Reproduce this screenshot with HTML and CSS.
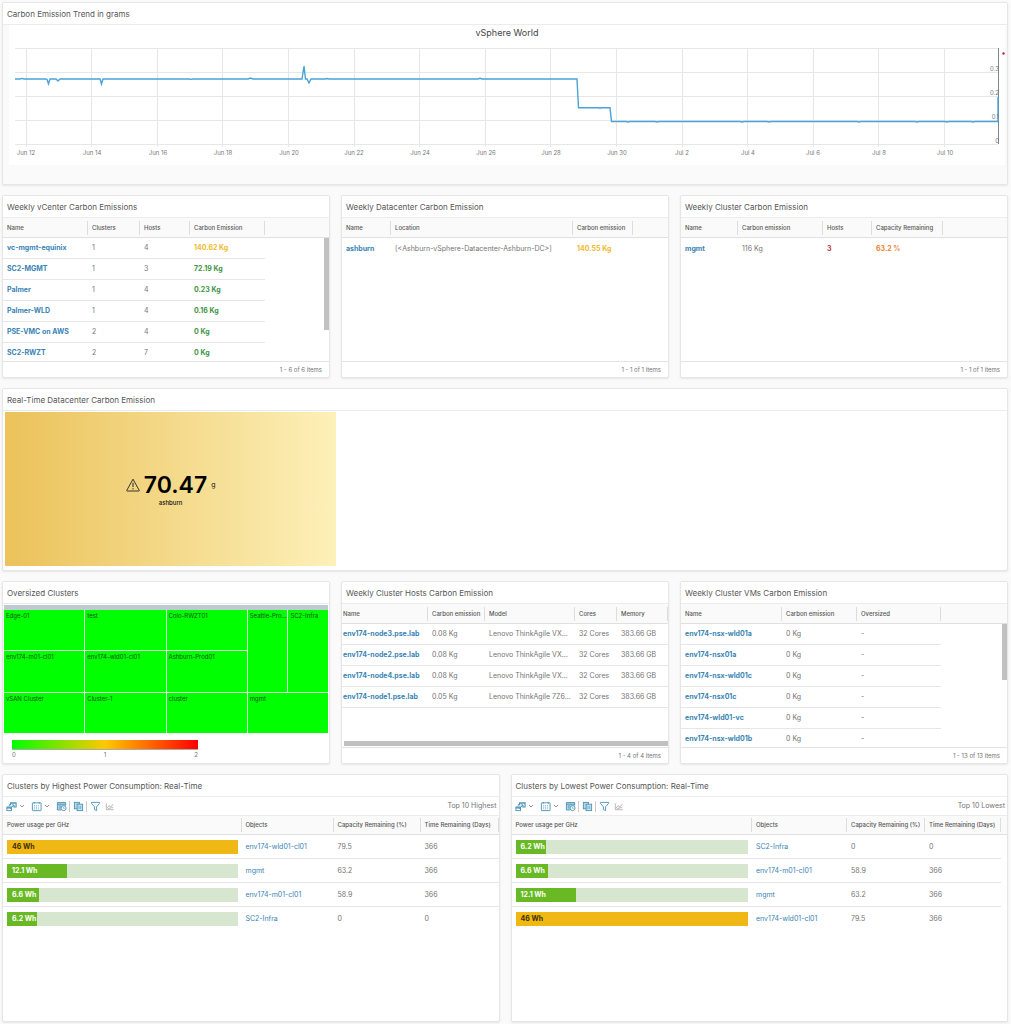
FILE: index.html
```html
<!DOCTYPE html>
<html lang="en">
<head>
    <meta charset="utf-8">
    <title>Carbon Emission Dashboard</title>
    <link rel="stylesheet" href="styles.css">
</head>
<body>
    <svg class="sprite" aria-hidden="true">
        <symbol id="i-actions" viewBox="0 0 12 12">
            <rect x="1" y="6.500" width="5" height="4" fill="none" stroke="currentColor"/>
            <path d="M1 7.500h5" stroke="currentColor" stroke-width="1.500"/>
            <path d="M5 4.500V2h6v4.500H8M5.500 2.500h5" fill="none" stroke="currentColor" stroke-width="1.200"/>
            <path d="M3.500 5.500V4H5M4.500 8.500L8.500 4.500M6.300 4.300h2.500v2.400" fill="none" stroke="currentColor"/>
        </symbol>
        <symbol id="i-chevron" viewBox="0 0 6 6">
            <path d="M1 2l2 2 2-2" fill="none" stroke="currentColor" stroke-width="0.800"/>
        </symbol>
        <symbol id="i-calendar" viewBox="0 0 12 12">
            <rect x="1.500" y="2" width="9.500" height="8.500" rx="0.500" fill="none" stroke="currentColor"/>
            <path d="M3.500 1v2M9 1v2" stroke="currentColor"/>
            <path d="M3.500 5h5.500M3.500 6.800h5.500M3.500 8.600h5.500" stroke="currentColor" stroke-width="0.800" stroke-dasharray="1 1"/>
        </symbol>
        <symbol id="i-reset" viewBox="0 0 12 12">
            <path d="M10.500 5V1.700h-9V9.800h4" fill="#bcd8e4" stroke="currentColor"/>
            <path d="M1.500 3.500h9M3 5.500h3M3 7.500h2" stroke="currentColor"/>
            <circle cx="8.300" cy="7.800" r="2.700" fill="#fff" stroke="currentColor"/>
            <path d="M8.300 6.300v1.700h1.300" fill="none" stroke="currentColor" stroke-width="0.700"/>
        </symbol>
        <symbol id="i-copy" viewBox="0 0 12 12">
            <rect x="1.500" y="1.500" width="5.500" height="7" fill="#bcd8e4" stroke="currentColor"/>
            <rect x="4.500" y="3.500" width="6" height="7" fill="#d6e8ef" stroke="currentColor"/>
            <path d="M6.500 5v4M8.500 5v4" stroke="currentColor" stroke-width="0.800"/>
        </symbol>
        <symbol id="i-filter" viewBox="0 0 12 12">
            <path d="M1.500 1.500h9v1L7.200 6.300v4.200L4.800 9.300v-3L1.500 2.500z" fill="none" stroke="currentColor" stroke-linejoin="round"/>
        </symbol>
        <symbol id="i-chart" viewBox="0 0 12 12">
            <path d="M2.500 2.500v7h8M3.500 7.500l2-2.500 2 1.500L10 3.500M4 8.700l2.500-1 3.500-.5" fill="none" stroke="currentColor" stroke-width="0.900"/>
        </symbol>
    </svg>

    <main class="dashboard">
        <section class="widget wide">
            <h2>Carbon Emission Trend in grams</h2>
            <div class="trend">
                <h3>vSphere World</h3>
                <svg viewBox="0 0 996 124" role="img" aria-label="Carbon emission trend">
                    <g class="grid-lines">
                        <path d="M6 7.500h983M6 31.500h983M6 55.500h983M6 79.500h983M6 103.500h983"/>
                        <path d="M17.500 7v99M82.500 7v99M148.500 7v99M213.500 7v99M279.500 7v99M345.500 7v99M410.500 7v99M476.500 7v99M541.500 7v99M607.500 7v99M673.500 7v99M738.500 7v99M804.500 7v99M869.500 7v99M935.500 7v99"/>
                    </g>
                    <path class="axis" d="M989.500 7v96"/>
                    <path class="series" stroke-width="1.400" d="M6 38H11L13 37.400L15 38H37L38 38.300L39.500 43L41 38H47L49 40L51 38H91L92.500 43L94 38H180L182 38.400L184 38H239L241.500 37L244 38H293L295 25L296.500 38H298L300 42L302 38H316L318 37.500L320 38H469L471 37.300L473 38H568L569.500 66.800H590L591 67.300L592 66.800H601L602.500 80.500H617L619 81L621 80.500H646L648 81L650 80.500H731L733 81L735 80.500H758L760 81L762 80.500H848L850 81L852 80.500H906L908 81L910 80.500H936L938 81L940 80.500H962L964 81L966 80.500H989V56"/>
                    <circle cx="994.500" cy="12.500" r="1.200" fill="#c8202c"/>
                    <g class="y-labels">
                        <text x="990" y="30">0.3</text>
                        <text x="990" y="54">0.2</text>
                        <text x="990" y="78">0.1</text>
                        <text x="990" y="102">0</text>
                    </g>
                    <g class="x-labels">
                        <text x="17" y="114">Jun 12</text>
                        <text x="83" y="114">Jun 14</text>
                        <text x="149" y="114">Jun 16</text>
                        <text x="214" y="114">Jun 18</text>
                        <text x="280" y="114">Jun 20</text>
                        <text x="345" y="114">Jun 22</text>
                        <text x="411" y="114">Jun 24</text>
                        <text x="477" y="114">Jun 26</text>
                        <text x="542" y="114">Jun 28</text>
                        <text x="608" y="114">Jun 30</text>
                        <text x="673" y="114">Jul 2</text>
                        <text x="739" y="114">Jul 4</text>
                        <text x="804" y="114">Jul 6</text>
                        <text x="870" y="114">Jul 8</text>
                        <text x="936" y="114">Jul 10</text>
                    </g>
                </svg>
            </div>
        </section>

        <section class="widget third">
            <h2>Weekly vCenter Carbon Emissions</h2>
            <div class="grid-body">
                <table class="vcenters">
                    <colgroup><col><col><col><col><col></colgroup>
                    <thead>
                        <tr><th>Name</th><th>Clusters</th><th>Hosts</th><th>Carbon Emission</th><td></td></tr>
                    </thead>
                    <tbody>
                        <tr><td><a href="#">vc-mgmt-equinix</a></td><td>1</td><td>4</td><td class="warn">140.62 Kg</td></tr>
                        <tr><td><a href="#">SC2-MGMT</a></td><td>1</td><td>3</td><td class="good">72.19 Kg</td></tr>
                        <tr><td><a href="#">Palmer</a></td><td>1</td><td>4</td><td class="good">0.23 Kg</td></tr>
                        <tr><td><a href="#">Palmer-WLD</a></td><td>1</td><td>4</td><td class="good">0.16 Kg</td></tr>
                        <tr><td><a href="#">PSE-VMC on AWS</a></td><td>2</td><td>4</td><td class="good">0 Kg</td></tr>
                        <tr><td><a href="#">SC2-RWZT</a></td><td>2</td><td>7</td><td class="good">0 Kg</td></tr>
                    </tbody>
                </table>
                <div class="thumb-y tall"></div>
            </div>
            <footer>1 - 6 of 6 items</footer>
        </section>

        <section class="widget third">
            <h2>Weekly Datacenter Carbon Emission</h2>
            <div class="grid-body">
                <table class="datacenters">
                    <colgroup><col><col><col><col></colgroup>
                    <thead>
                        <tr><th>Name</th><th>Location</th><th>Carbon emission</th><td></td></tr>
                    </thead>
                    <tbody class="single">
                        <tr><td><a href="#">ashburn</a></td><td>[&lt;Ashburn-vSphere-Datacenter-Ashburn-DC&gt;]</td><td class="warn">140.55 Kg</td></tr>
                    </tbody>
                </table>
            </div>
            <footer>1 - 1 of 1 items</footer>
        </section>

        <section class="widget third">
            <h2>Weekly Cluster Carbon Emission</h2>
            <div class="grid-body">
                <table class="clusters">
                    <colgroup><col><col><col><col><col></colgroup>
                    <thead>
                        <tr><th>Name</th><th>Carbon emission</th><th>Hosts</th><th>Capacity Remaining</th><td></td></tr>
                    </thead>
                    <tbody class="single">
                        <tr><td><a href="#">mgmt</a></td><td>116 Kg</td><td class="critical">3</td><td class="high">63.2 %</td></tr>
                    </tbody>
                </table>
            </div>
            <footer>1 - 1 of 1 items</footer>
        </section>

        <section class="widget wide">
            <h2>Real-Time Datacenter Carbon Emission</h2>
            <div class="scoreboard">
                <div class="score">
                    <svg viewBox="0 0 14 14" aria-hidden="true">
                        <path d="M7 1.200L13.200 12.300a.5.5 0 0 1-.4.700H1.200a.5.5 0 0 1-.4-.7z" fill="none" stroke="#222" stroke-width="0.900" stroke-linejoin="round"/>
                        <path d="M7 4.800v4.200M7 10.200v1.200" stroke="#222"/>
                    </svg>
                    <strong>70.47</strong>
                    <span>g</span>
                </div>
                <div class="score-name">ashburn</div>
            </div>
        </section>

        <section class="widget third">
            <h2>Oversized Clusters</h2>
            <div class="heatmap">
                <div class="cell">Edge-01</div>
                <div class="cell">test</div>
                <div class="cell">Colo-RWZT01</div>
                <div class="cell tall">Seattle-Prod01</div>
                <div class="cell tall">SC2-Infra</div>
                <div class="cell">env174-m01-cl01</div>
                <div class="cell">env174-wld01-cl01</div>
                <div class="cell">Ashburn-Prod01</div>
                <div class="cell">vSAN Cluster</div>
                <div class="cell">Cluster-1</div>
                <div class="cell">cluster</div>
                <div class="cell">mgmt</div>
            </div>
            <div class="legend">
                <div class="scale"></div>
                <div class="ticks"><span>0</span><span>1</span><span>2</span></div>
            </div>
        </section>

        <section class="widget third">
            <h2>Weekly Cluster Hosts Carbon Emission</h2>
            <div class="grid-body">
                <table class="hosts">
                    <colgroup><col><col><col><col><col></colgroup>
                    <thead>
                        <tr><th>Name</th><th>Carbon emission</th><th>Model</th><th>Cores</th><th>Memory</th></tr>
                    </thead>
                    <tbody>
                        <tr><td><a href="#">env174-node3.pse.lab</a></td><td>0.08 Kg</td><td>Lenovo ThinkAgile VX7520</td><td>32 Cores</td><td>383.66 GB</td></tr>
                        <tr><td><a href="#">env174-node2.pse.lab</a></td><td>0.08 Kg</td><td>Lenovo ThinkAgile VX7520</td><td>32 Cores</td><td>383.66 GB</td></tr>
                        <tr><td><a href="#">env174-node4.pse.lab</a></td><td>0.08 Kg</td><td>Lenovo ThinkAgile VX7520</td><td>32 Cores</td><td>383.66 GB</td></tr>
                        <tr><td><a href="#">env174-node1.pse.lab</a></td><td>0.05 Kg</td><td>Lenovo ThinkAgile 7Z63CTO</td><td>32 Cores</td><td>383.66 GB</td></tr>
                    </tbody>
                </table>
            </div>
            <div class="thumb-x"></div>
            <footer>1 - 4 of 4 items</footer>
        </section>

        <section class="widget third">
            <h2>Weekly Cluster VMs Carbon Emission</h2>
            <div class="grid-body">
                <table class="vms">
                    <colgroup><col><col><col><col></colgroup>
                    <thead>
                        <tr><th>Name</th><th>Carbon emission</th><th>Oversized</th><td></td></tr>
                    </thead>
                    <tbody>
                        <tr><td><a href="#">env174-nsx-wld01a</a></td><td>0 Kg</td><td>-</td></tr>
                        <tr><td><a href="#">env174-nsx01a</a></td><td>0 Kg</td><td>-</td></tr>
                        <tr><td><a href="#">env174-nsx-wld01c</a></td><td>0 Kg</td><td>-</td></tr>
                        <tr><td><a href="#">env174-nsx01c</a></td><td>0 Kg</td><td>-</td></tr>
                        <tr><td><a href="#">env174-wld01-vc</a></td><td>0 Kg</td><td>-</td></tr>
                        <tr><td><a href="#">env174-nsx-wld01b</a></td><td>0 Kg</td><td>-</td></tr>
                    </tbody>
                </table>
                <div class="thumb-y"></div>
            </div>
            <footer>1 - 13 of 13 items</footer>
        </section>

        <section class="widget half">
            <h2>Clusters by Highest Power Consumption: Real-Time</h2>
            <div class="toolbar">
                <button type="button" aria-label="Actions"><svg><use href="#i-actions"/></svg><svg class="chevron"><use href="#i-chevron"/></svg></button>
                <button type="button" aria-label="Date controls"><svg><use href="#i-calendar"/></svg><svg class="chevron"><use href="#i-chevron"/></svg></button>
                <button type="button" class="divided" aria-label="Reset time"><svg><use href="#i-reset"/></svg></button>
                <button type="button" class="divided" aria-label="Copy"><svg><use href="#i-copy"/></svg></button>
                <button type="button" aria-label="Filter"><svg><use href="#i-filter"/></svg></button>
                <button type="button" class="off" aria-label="Show chart" disabled><svg><use href="#i-chart"/></svg></button>
                <span>Top 10 Highest</span>
            </div>
            <table class="top-n highest">
                <colgroup><col><col><col><col></colgroup>
                <thead>
                    <tr><th>Power usage per GHz</th><th>Objects</th><th>Capacity Remaining (%)</th><th>Time Remaining (Days)</th></tr>
                </thead>
                <tbody>
                    <tr><td><div class="bar"><div class="fill amber" style="width: 100%">46 Wh</div></div></td><td><a href="#">env174-wld01-cl01</a></td><td>79.5</td><td>366</td></tr>
                    <tr><td><div class="bar"><div class="fill" style="width: 26%">12.1 Wh</div></div></td><td><a href="#">mgmt</a></td><td>63.2</td><td>366</td></tr>
                    <tr><td><div class="bar"><div class="fill" style="width: 14%">6.6 Wh</div></div></td><td><a href="#">env174-m01-cl01</a></td><td>58.9</td><td>366</td></tr>
                    <tr><td><div class="bar"><div class="fill" style="width: 13%">6.2 Wh</div></div></td><td><a href="#">SC2-Infra</a></td><td>0</td><td>0</td></tr>
                </tbody>
            </table>
        </section>

        <section class="widget half">
            <h2>Clusters by Lowest Power Consumption: Real-Time</h2>
            <div class="toolbar">
                <button type="button" aria-label="Actions"><svg><use href="#i-actions"/></svg><svg class="chevron"><use href="#i-chevron"/></svg></button>
                <button type="button" aria-label="Date controls"><svg><use href="#i-calendar"/></svg><svg class="chevron"><use href="#i-chevron"/></svg></button>
                <button type="button" class="divided" aria-label="Reset time"><svg><use href="#i-reset"/></svg></button>
                <button type="button" class="divided" aria-label="Copy"><svg><use href="#i-copy"/></svg></button>
                <button type="button" aria-label="Filter"><svg><use href="#i-filter"/></svg></button>
                <button type="button" class="off" aria-label="Show chart" disabled><svg><use href="#i-chart"/></svg></button>
                <span>Top 10 Lowest</span>
            </div>
            <table class="top-n lowest">
                <colgroup><col><col><col><col><col></colgroup>
                <thead>
                    <tr><th>Power usage per GHz</th><th>Objects</th><th>Capacity Remaining (%)</th><th>Time Remaining (Days)</th><td></td></tr>
                </thead>
                <tbody>
                    <tr><td><div class="bar"><div class="fill" style="width: 13%">6.2 Wh</div></div></td><td><a href="#">SC2-Infra</a></td><td>0</td><td>0</td></tr>
                    <tr><td><div class="bar"><div class="fill" style="width: 14%">6.6 Wh</div></div></td><td><a href="#">env174-m01-cl01</a></td><td>58.9</td><td>366</td></tr>
                    <tr><td><div class="bar"><div class="fill" style="width: 26%">12.1 Wh</div></div></td><td><a href="#">mgmt</a></td><td>63.2</td><td>366</td></tr>
                    <tr><td><div class="bar"><div class="fill amber" style="width: 100%">46 Wh</div></div></td><td><a href="#">env174-wld01-cl01</a></td><td>79.5</td><td>366</td></tr>
                </tbody>
            </table>
        </section>
    </main>
</body>
</html>
```
FILE: styles.css
```css
* {
    box-sizing: border-box;
}
body {
    margin: 0;
    background: #fafafa;
    color: #747474;
    font-family: Inter, "Liberation Sans", sans-serif;
    font-size: 7px;
    line-height: 10px;
}
.sprite {
    display: none;
}
.dashboard {
    display: grid;
    grid-template-columns: repeat(6, 1fr);
    grid-template-rows: repeat(4, minmax(183px, auto)) minmax(248px, auto);
    gap: 10px 11px;
    padding: 2px 3px 2px 2px;
}

/* widgets */
.widget {
    display: flex;
    flex-direction: column;
    min-width: 0;
    background: #fff;
    border: 1px solid #e6e6e6;
    border-radius: 2px;
    box-shadow: 0 1px 2px #e6e6e6;
}
.wide {
    grid-column: span 6;
    background: #fafafa;
}
.third {
    grid-column: span 2;
}
.half {
    grid-column: span 3;
}
h2 {
    margin: 0;
    padding: 0 4px;
    height: 22px;
    line-height: 22px;
    font-size: 8px;
    font-weight: 400;
    color: #565656;
    background: #fff;
    border-bottom: 1px solid #ececec;
    white-space: nowrap;
}
a {
    color: #3a84b4;
    text-decoration: none;
}
footer {
    height: 16px;
    padding: 0 7px;
    line-height: 15px;
    font-size: 6px;
    text-align: right;
    border-top: 1px solid #e4e4e4;
}

/* trend chart */
.trend {
    margin: 0 2px 0 6px;
    background: #fff;
}
.trend h3 {
    margin: 0;
    height: 16px;
    line-height: 16px;
    text-align: center;
    font-size: 9px;
    font-weight: 400;
    color: #444;
}
.trend svg {
    display: block;
    width: 100%;
}
.grid-lines path {
    fill: none;
    stroke: #e4e8e8;
}
.axis {
    stroke: #7c8890;
}
.series {
    fill: none;
    stroke: #4ba3d6;
}
.trend text {
    font-size: 6px;
    fill: #777;
}
.x-labels {
    text-anchor: middle;
}
.y-labels {
    text-anchor: end;
}

/* list grids */
.grid-body {
    display: flex;
    flex: 1 1 0;
    align-items: flex-start;
    min-height: 0;
    overflow: hidden;
}
table {
    width: 100%;
    table-layout: fixed;
    border-collapse: separate;
    border-spacing: 0;
}
th, td {
    height: 21px;
    padding: 0 4px;
    overflow: hidden;
    text-align: left;
    text-overflow: ellipsis;
    white-space: nowrap;
}
thead th, thead td {
    height: 20px;
    padding-right: 1px;
    font-size: 6px;
    font-weight: 500;
    color: #565656;
    background: #fafafa;
    border-bottom: 1px solid #e0e0e0;
}
thead th {
    background: #fafafa linear-gradient(#ddd, #ddd) right center / 1px 14px no-repeat;
}
tbody td {
    border-bottom: 1px solid #e6e6e6;
}
.single td {
    border-bottom: none;
}
.grid-body a {
    font-weight: 700;
}
.good, .warn, .high, .critical {
    font-weight: 700;
}
.good {
    color: #3f9448;
}
.warn {
    color: #efbb30;
}
.high {
    color: #e88538;
}
.critical {
    color: #b83a3a;
}
.thumb-y {
    flex: none;
    width: 5px;
    height: 56px;
    margin: 20px 0 0 -5px;
    background: #c1c1c1;
}
.thumb-y.tall {
    height: 92px;
}
.thumb-x {
    height: 5px;
    margin: 0 0 1px 2px;
    background: #c1c1c1;
}
.vcenters col:nth-child(1) { width: 85px; }
.vcenters col:nth-child(2) { width: 52px; }
.vcenters col:nth-child(3) { width: 50px; }
.vcenters col:nth-child(4) { width: 75px; }
.datacenters col:nth-child(1) { width: 49px; }
.datacenters col:nth-child(2) { width: 182px; }
.datacenters col:nth-child(3) { width: 60px; }
.clusters col:nth-child(1) { width: 57px; }
.clusters col:nth-child(2) { width: 85px; }
.clusters col:nth-child(3) { width: 49px; }
.clusters col:nth-child(4) { width: 71px; }
.hosts col:nth-child(1) { width: 86px; }
.hosts col:nth-child(2) { width: 57px; }
.hosts col:nth-child(4) { width: 42px; }
.hosts col:nth-child(5) { width: 51px; }
.hosts tr > :first-child { padding: 0 1px; }
.vms col:nth-child(1) { width: 101px; }
.vms col:nth-child(2) { width: 75px; }
.vms col:nth-child(3) { width: 84px; }

/* scoreboard */
.wide:has(.scoreboard) {
    background: #fff;
}
.scoreboard {
    display: flex;
    flex: 1;
    flex-direction: column;
    align-items: center;
    justify-content: center;
    width: 33%;
    margin: 1px 2px 4px;
    padding-top: 2px;
    color: #111;
    background: linear-gradient(to right, #ebc25a, #fdf0b9);
}
.score {
    display: flex;
    align-items: center;
    gap: 4px;
    height: 26px;
}
.score svg {
    width: 14px;
    height: 14px;
}
.score strong {
    font-size: 23px;
    font-weight: 600;
    line-height: 26px;
    color: #000;
}
.score-name {
    font-size: 6px;
    font-weight: 500;
}

/* heatmap */
.heatmap {
    display: grid;
    grid-template-columns: repeat(8, 1fr);
    grid-template-rows: repeat(3, 1fr);
    gap: 1px;
    flex: 1;
    margin: 1px 1px 0;
    border-top: 5px solid #bfcbd0;
    background: #d8f5d8;
}
.cell {
    grid-column: span 2;
    padding: 1px 0 0 2px;
    overflow: hidden;
    background: #0f0;
    color: #1d4a1d;
    font-size: 6px;
    text-overflow: ellipsis;
    white-space: nowrap;
}
.cell.tall {
    grid-column: span 1;
    grid-row: span 2;
}
.legend {
    width: 57%;
    margin: 7px 9px 4px;
    font-size: 6px;
}
.scale {
    height: 9px;
    background: linear-gradient(to right, #0f0, #ffc800 50%, #f00);
}
.ticks {
    display: flex;
    justify-content: space-between;
    border-top: 1px solid #aaa;
    line-height: 9px;
}

/* top-n lists */
.toolbar {
    display: flex;
    align-items: center;
    gap: 6px;
    height: 18px;
    padding: 0 2px 0 3px;
}
.toolbar span {
    margin-left: auto;
}
.toolbar button {
    display: flex;
    align-items: center;
    gap: 2px;
    padding: 0;
    border: none;
    background: none;
    color: #4a94b8;
}
.toolbar svg {
    width: 11px;
    height: 11px;
}
.toolbar .chevron {
    width: 6px;
    height: 6px;
    color: #777;
}
.toolbar .divided {
    padding-right: 2px;
    margin-right: -3px;
    border-right: 1px solid #ccc;
}
.toolbar .off {
    margin-left: -3px;
    color: #aaa;
}
.top-n thead th, .top-n thead td {
    border-top: 1px solid #ececec;
}
.top-n tbody td {
    height: 24px;
}
.top-n tbody tr:last-child td {
    border-bottom: none;
}
.top-n col:nth-child(2) { width: 92px; }
.top-n col:nth-child(3) { width: 87px; }
.top-n col:nth-child(4) { width: 78px; }
.lowest col:nth-child(2) { width: 95px; }
.lowest col:nth-child(3) { width: 78px; }
.lowest col:nth-child(4) { width: 76px; }
.lowest col:nth-child(5) { width: 6px; }
.bar {
    height: 14px;
    background: #d6e6cf;
}
.fill {
    height: 14px;
    padding-left: 5px;
    line-height: 14px;
    font-weight: 700;
    color: #fff;
    background: #68b923;
}
.amber {
    color: #3d2f00;
    background: #efb815;
}
```
